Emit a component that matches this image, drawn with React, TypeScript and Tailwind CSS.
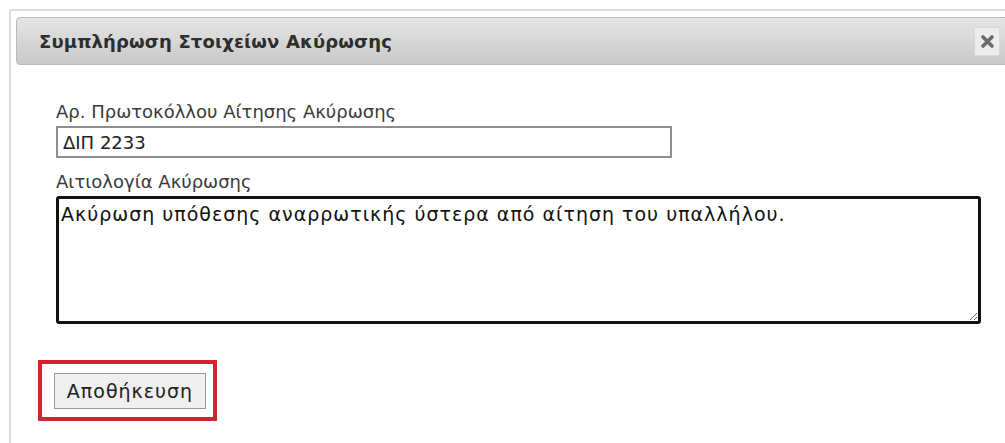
import { useState } from 'react';

const font = { fontFamily: '"DejaVu Sans", Verdana, sans-serif' };

export default function App() {
    const [protocol, setProtocol] = useState('ΔΙΠ 2233');
    const [reason, setReason] = useState('Ακύρωση υπόθεσης αναρρωτικής ύστερα από αίτηση του υπαλλήλου.');

    return (
        <div className="w-[1005px] h-[443px] bg-white overflow-hidden pt-[9px] pl-[9px]" style={font}>
            {/* dialog frame */}
            <div className="h-full border-t-2 border-l-2 border-[#dcdcdc] rounded-tl-[3px] pt-[6px] pl-[5px]">
                {/* title bar */}
                <div className="h-[48px] -mr-[4px] flex items-center justify-between pl-[22px] pr-[8px] rounded-[4px] border border-[#b9b9b9] bg-gradient-to-b from-[#e4e4e4] to-[#c9c9c9]">
                    <span className="text-[18px] font-bold text-[#2e2e2e] tracking-[0.15px]">Συμπλήρωση Στοιχείων Ακύρωσης</span>
                    <button className="w-[26px] h-[29px] flex items-center justify-center bg-[#ededed] border border-[#d8d8d8] rounded-[2px]">
                        <svg width="15" height="15" viewBox="0 0 15 15">
                            <path d="M3 3 L12 12 M12 3 L3 12" stroke="#6c6c6c" strokeWidth="3.6" strokeLinecap="round" />
                        </svg>
                    </button>
                </div>

                <div className="pl-[40px] pt-[37px]">
                    <label className="block text-[18px] text-[#3a3a3a] leading-[20px]">Αρ. Πρωτοκόλλου Αίτησης Ακύρωσης</label>
                    <input
                        value={protocol}
                        onChange={e => setProtocol(e.target.value)}
                        className="mt-[4px] w-[616px] h-[32px] px-[5px] border-2 border-[#8f8f8f] text-[18px] text-[#222] outline-none"
                        style={font}
                    />
                    <label className="block mt-[14px] text-[18px] text-[#3a3a3a] leading-[20px]">Αιτιολογία Ακύρωσης</label>
                    <textarea
                        value={reason}
                        onChange={e => setReason(e.target.value)}
                        className="block mt-[4px] w-[925px] h-[128px] px-[2px] py-[4px] border-[3px] border-[#111] rounded-[3px] text-[19px] tracking-[1px] leading-[22px] text-[#111] outline-none resize"
                        style={font}
                    />
                </div>

                <div className="pl-[22px] pt-[36px]">
                    <div className="inline-flex border-4 border-[#d2232f] pl-[12px] pr-[7px] pt-[9px] pb-[8px]">
                        <button className="w-[152px] h-[36px] bg-[#efefef] border border-[#9a9a9a] text-[19px] tracking-[1px] text-[#222]" style={font}>
                            Αποθήκευση
                        </button>
                    </div>
                </div>
            </div>
        </div>
    );
}
